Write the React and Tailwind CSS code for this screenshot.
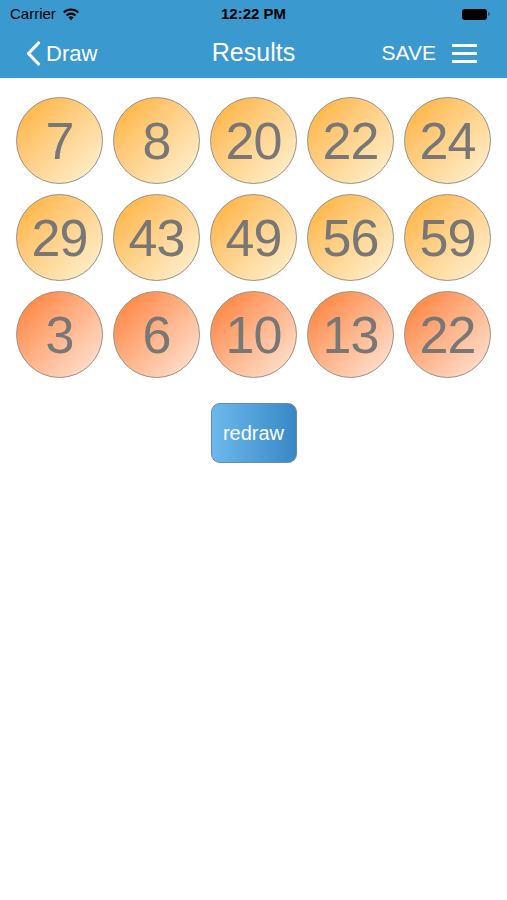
const yellow = [7, 8, 20, 22, 24, 29, 43, 49, 56, 59]
const orange = [3, 6, 10, 13, 22]

function Ball({ n, hot }) {
  return (
    <div
      className={
        'w-[87px] h-[87px] rounded-full border border-[#9a9186] flex items-center justify-center ' +
        (hot
          ? 'bg-gradient-to-br from-[#fd7a24] to-[#ffe8da]'
          : 'bg-gradient-to-br from-[#fdaf25] to-[#fff4d6]')
      }
    >
      <span className="text-[52px] leading-none text-[#777777] tracking-[-1px]">{n}</span>
    </div>
  )
}

export default function App() {
  return (
    <div className="w-[507px] h-[900px] bg-white" style={{ fontFamily: '"Liberation Sans", Arial, sans-serif' }}>
      {/* Header */}
      <div className="bg-[#3a99cf] h-[78px]">
        <div className="h-[28px] relative flex items-center px-[10px] text-black">
          <span className="text-[15px]">Carrier</span>
          <svg className="ml-[6px] w-[18px] h-[14px]" viewBox="0 0 17 13">
            <path d="M8.5 12.5 L6 9.6 A3.8 3.8 0 0 1 11 9.6 Z" fill="#000" />
            <path d="M3.6 7.2 A7 7 0 0 1 13.4 7.2 L12.1 8.6 A5.1 5.1 0 0 0 4.9 8.6 Z" fill="#000" />
            <path d="M1 4.4 A10.7 10.7 0 0 1 16 4.4 L14.7 5.8 A8.8 8.8 0 0 0 2.3 5.8 Z" fill="#000" />
          </svg>
          <span className="absolute left-1/2 -translate-x-1/2 text-[15px] font-bold">12:22 PM</span>
          <div className="ml-auto mr-[7px] flex items-center">
            <div className="w-[25px] h-[11px] rounded-[3px] bg-black" />
            <div className="w-[2px] h-[4px] bg-black/40 rounded-r-sm ml-[1px]" />
          </div>
        </div>
        <div className="h-[50px] relative flex items-center text-white">
          <div className="flex items-center pl-[26px]">
            <svg className="w-[15px] h-[25px]" viewBox="0 0 15 25" fill="none" stroke="white" strokeWidth="3.2" strokeLinecap="round" strokeLinejoin="round">
              <path d="M12.5 2 L2.5 12.5 L12.5 23" />
            </svg>
            <span className="text-[22px] ml-[5px]">Draw</span>
          </div>
          <span className="absolute left-1/2 -translate-x-1/2 text-[25px]">Results</span>
          <div className="ml-auto flex items-center pr-[30px]">
            <span className="text-[21px]">SAVE</span>
            <div className="ml-[16px] w-[25px] flex flex-col gap-[5px]">
              <div className="h-[3px] bg-white" />
              <div className="h-[3px] bg-white" />
              <div className="h-[3px] bg-white" />
            </div>
          </div>
        </div>
      </div>

      {/* Balls */}
      <div className="pt-[19px] px-[16px] grid grid-cols-5 gap-[10px]">
        {yellow.map((n, i) => <Ball key={'y' + i} n={n} />)}
        {orange.map((n, i) => <Ball key={'o' + i} n={n} hot />)}
      </div>

      <div className="flex justify-center mt-[25px]">
        <button className="w-[86px] h-[60px] rounded-[9px] border border-[#6d8ba0] bg-gradient-to-r from-[#6bb9ec] to-[#3888c6] text-white text-[20px]">
          redraw
        </button>
      </div>
    </div>
  )
}
